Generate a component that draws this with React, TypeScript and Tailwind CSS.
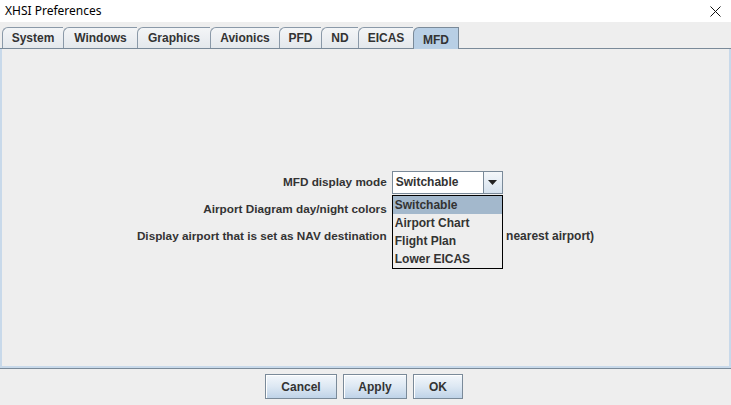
const tabs = [
  { name: 'System', cls: 'w-[61px]' },
  { name: 'Windows', cls: 'w-[74px]' },
  { name: 'Graphics', cls: 'w-[73px]' },
  { name: 'Avionics', cls: 'w-[69px]' },
  { name: 'PFD', cls: 'w-[42px]' },
  { name: 'ND', cls: 'w-[37px]' },
  { name: 'EICAS', cls: 'w-[55px]' },
];

const modes = ['Switchable', 'Airport Chart', 'Flight Plan', 'Lower EICAS'];

function Combo({ value, children }: { value: string; children?: React.ReactNode }) {
  return (
    <div className="relative flex h-[23px] w-[111px] border border-[#7a8a99] bg-white">
      <div className="flex flex-1 items-center pl-[3px]">{value}</div>
      <div className="flex w-[19px] items-center justify-center border-l border-[#7a8a99] bg-gradient-to-b from-[#f4f7fa] to-[#d6e2ee]">
        <svg width="9" height="5" viewBox="0 0 9 5">
          <polygon points="0,0 9,0 4.5,5" fill="#222" />
        </svg>
      </div>
      {children}
    </div>
  );
}

function Button({ label, cls }: { label: string; cls: string }) {
  return (
    <button
      className={`${cls} h-[25px] border border-[#7a8a99] bg-gradient-to-b from-[#f3f7fb] via-[#dde8f3] to-[#bfd3e8] text-[12px] font-bold text-[#333333] shadow-[inset_1px_1px_0_#ffffff]`}
    >
      {label}
    </button>
  );
}

export default function App() {
  return (
    <div className="flex h-[405px] w-[731px] flex-col overflow-hidden bg-[#eeeeee] font-['Liberation_Sans',Arial,sans-serif] text-[12px] text-[#333333]">
      {/* title bar */}
      <div className="flex h-[22px] items-center justify-between bg-white pl-[5px] pr-[10px]">
        <span className="font-['Noto_Sans',sans-serif] text-[12px] font-normal text-black">XHSI Preferences</span>
        <svg width="11" height="11" viewBox="0 0 11 11">
          <path d="M0.5 0.5 L10.5 10.5 M10.5 0.5 L0.5 10.5" stroke="#111" strokeWidth="1" />
        </svg>
      </div>

      {/* tabs */}
      <div className="flex h-[26px] items-end pl-[2px]">
        {tabs.map((t) => (
          <div
            key={t.name}
            className={`${t.cls} flex h-[21px] items-center justify-center rounded-tl-[6px] border-l border-t border-[#8a99a8] bg-gradient-to-b from-[#f3f5f7] to-[#e4e8ec] font-bold`}
          >
            {t.name}
          </div>
        ))}
        <div className="relative z-10 -mb-px flex h-[22px] w-[46px] items-start justify-center rounded-tl-[6px] border-x border-t border-[#7a8a99] bg-[#b8cfe5] pt-[3px] font-bold">
          MFD
        </div>
      </div>

      {/* content panel */}
      <div className="flex flex-1 flex-col border-t border-[#7a8a99]">
        <div className="flex flex-1 items-center justify-center border-x-2 border-b-2 border-[#c8d9ea] bg-[#eeeeee] pt-[3px]">
          <div className="grid grid-cols-[auto_auto] items-center gap-x-[5px] gap-y-[4px] font-bold">
            <div className="text-right text-[11.75px]">MFD display mode</div>
            <Combo value="Switchable">
              <div className="absolute left-[-1px] top-[23px] z-20 w-[111px] border border-black bg-[#eeeeee]">
                {modes.map((m, i) => (
                  <div
                    key={m}
                    className={`flex h-[18px] items-center pl-[2px] ${i === 0 ? 'bg-[#a3b8cc]' : ''}`}
                  >
                    {m}
                  </div>
                ))}
              </div>
            </Combo>

            <div className="text-right text-[11.75px]">Airport Diagram day/night colors</div>
            <Combo value="Day" />

            <div className="text-right text-[11.75px]">Display airport that is set as NAV destination</div>
            <div className="flex h-[23px] items-center">
              <div className="ml-[12px] mr-[4px] h-[13px] w-[13px] border border-[#7a8a99] bg-white" />
              <span>(instead of the nearest airport)</span>
            </div>
          </div>
        </div>
        <div className="h-px bg-[#7a8a99]" />
      </div>

      {/* buttons */}
      <div className="flex h-[36px] items-start justify-center gap-[6px] pr-[3px] pt-[5px]">
        <Button label="Cancel" cls="w-[72px]" />
        <Button label="Apply" cls="w-[64px]" />
        <Button label="OK" cls="w-[50px]" />
      </div>
    </div>
  );
}
